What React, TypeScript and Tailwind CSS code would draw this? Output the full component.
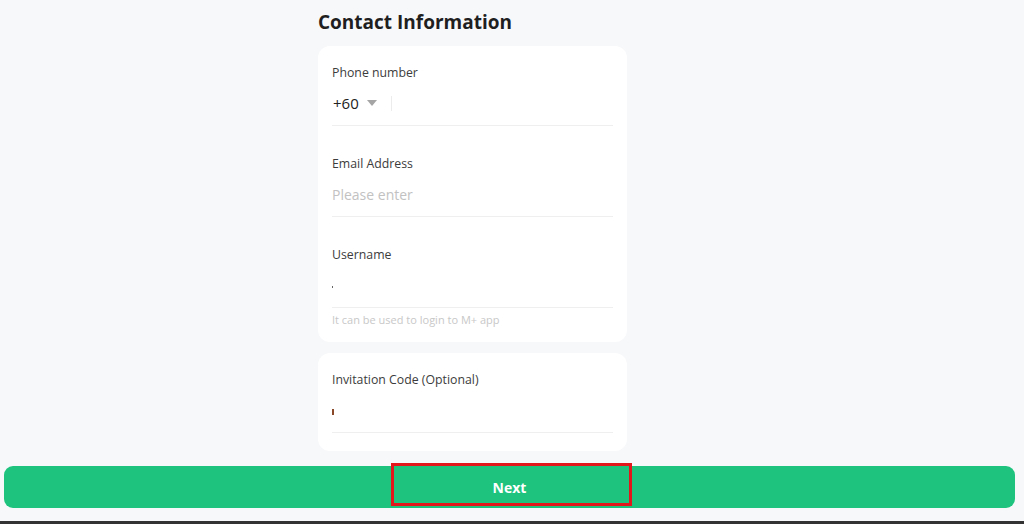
import React from 'react';

const Field: React.FC<{ label: string; first?: boolean; children: React.ReactNode }> = ({ label, first, children }) => (
  <div className={first ? '' : 'pt-[29px]'}>
    <p className="h-[18px] text-[12.3px] leading-[18px] text-[#3c3c3c]">{label}</p>
    <div className="mt-[10px] h-[22px] flex items-center">{children}</div>
    <div className="mt-[11px] h-px bg-[#efefef]"></div>
  </div>
);

const App: React.FC = () => {
  return (
    <div className="h-[524px] w-[1024px] flex flex-col bg-[#f7f8fa] font-['Open_Sans',sans-serif] overflow-hidden">
      <div className="ml-[318px] w-[309px] pt-[8px]">
        <h2 className="h-[28px] text-[19px] leading-[28px] font-bold text-[#1f1f1f]">Contact Information</h2>

        <div className="mt-[10px] bg-white rounded-[12px] px-[14px] pt-[18px] pb-[15px]">
          <Field label="Phone number" first>
            <span className="ml-[1px] text-[15px] text-[#222]">+60</span>
            <svg width="10" height="6" viewBox="0 0 10 6" className="ml-[8px]">
              <path d="M0 0 L10 0 L5 6 Z" fill="#a5a5a5" />
            </svg>
            <span className="ml-[14px] w-px h-[15px] bg-[#ececec]"></span>
          </Field>
          <Field label="Email Address">
            <span className="text-[14px] text-[#c2c2c2]">Please enter</span>
          </Field>
          <Field label="Username">
            <span className="mt-[4px] w-[1px] h-[2px] bg-[#666]"></span>
          </Field>
          <p className="mt-[5px] text-[11px] leading-[14px] text-[#c8c8c8]">It can be used to login to M+ app</p>
        </div>

        <div className="mt-[11px] bg-white rounded-[12px] px-[14px] pt-[18px] pb-[18px]">
          <Field label="Invitation Code (Optional)" first>
            <span className="mt-[4px] w-[2px] h-[6px] bg-[#8a4a2a]"></span>
          </Field>
        </div>
      </div>

      <div className="mt-[15px] pl-[4px] pr-[9px]">
        <div className="relative h-[42px] rounded-[9px] bg-[#1ec47d] flex items-center justify-center">
          <span className="text-[14px] font-bold text-white">Next</span>
          <div className="absolute left-[387px] top-[-3px] w-[241px] h-[43px] border-[3px] border-[#e3161b]"></div>
        </div>
      </div>

      <div className="mt-auto h-[3px] bg-[#333]"></div>
    </div>
  );
};

export default App;
